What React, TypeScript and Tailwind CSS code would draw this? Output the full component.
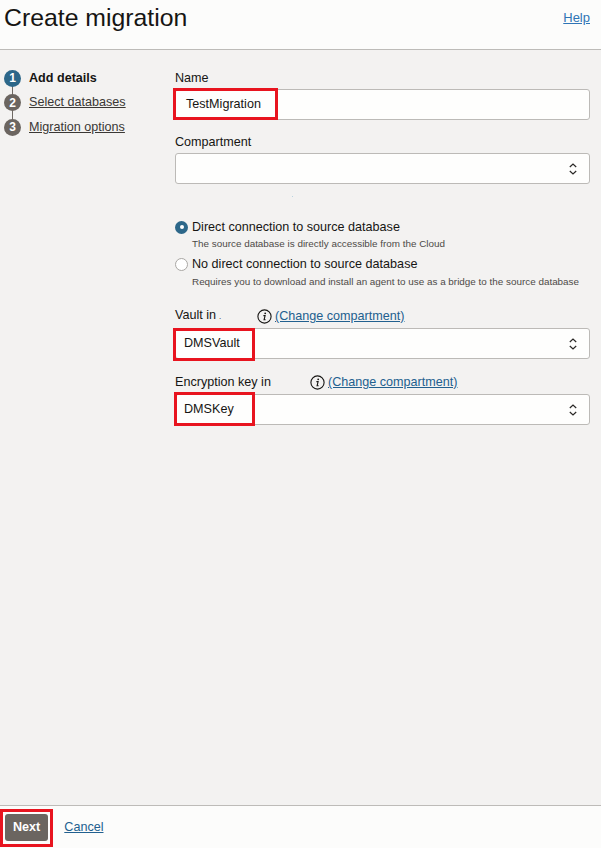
const ChevronUpDown = () => (
  <svg width="10" height="14" viewBox="0 0 10 14" fill="none" stroke="#2a2826" strokeWidth="1.2">
    <path d="M1.8 5 L5 2 L8.2 5" />
    <path d="M1.8 9 L5 12 L8.2 9" />
  </svg>
);

const InfoIcon = () => (
  <svg width="15" height="15" viewBox="0 0 15 15" fill="none">
    <circle cx="7.5" cy="7.5" r="6.6" stroke="#161513" strokeWidth="1.1" />
    <circle cx="8.2" cy="4.3" r="0.9" fill="#161513" />
    <path d="M6.4 6.6 H8.1 L7.1 10.8 H8.6" stroke="#161513" strokeWidth="1.1" fill="none" />
  </svg>
);

const RedBox = ({ className }: { className: string }) => (
  <div className={`pointer-events-none absolute border-[3px] border-[#e8141f] ${className}`} />
);

const Step = ({ n, label, active, last }: { n: number; label: string; active?: boolean; last?: boolean }) => (
  <div className="relative flex h-[24.5px] items-center gap-[8px]">
    {!last && <div className="absolute left-[8px] top-[12px] h-[25px] w-px bg-[#6f6a64]" />}
    <div
      className={`relative z-10 flex h-[17px] w-[17px] items-center justify-center rounded-full text-[12px] font-bold text-white ${
        active ? "bg-[#2c6789]" : "bg-[#6b6560]"
      }`}
    >
      {n}
    </div>
    {active ? (
      <span className="text-[12.6px] font-bold text-[#161513]">{label}</span>
    ) : (
      <span className="text-[12.6px] text-[#3a3835] underline">{label}</span>
    )}
  </div>
);

const Select = ({ value }: { value?: string }) => (
  <div className="flex h-[31px] items-center justify-between rounded-[3px] border border-[#bcbab7] bg-[#fefefd] pl-[8px] pr-[11px]">
    <span className="text-[12.6px] text-[#161513]">{value}</span>
    <ChevronUpDown />
  </div>
);

export default function App() {
  return (
    <div
      className="flex h-[848px] w-[601px] flex-col bg-[#f3f2f1] text-[#161513]"
      style={{ fontFamily: '"Liberation Sans", Arial, sans-serif' }}
    >
      <div className="flex h-[50px] shrink-0 items-start justify-between border-b border-[#bdbbb8] bg-[#fcfcfb] pl-[4px] pr-[11px]">
        <h1 className="mt-[4px] text-[24.8px] leading-[28px] text-[#161513]">Create migration</h1>
        <a className="mt-[8px] text-[13px] text-[#2f74b5] underline">Help</a>
      </div>

      <div className="flex flex-1 text-[12.6px]">
        <div className="w-[175px] shrink-0 pl-[4px] pt-[16px]">
          <Step n={1} label="Add details" active />
          <Step n={2} label="Select databases" />
          <Step n={3} label="Migration options" last />
        </div>

        <div className="relative flex w-[415px] flex-col pt-[19px]">
          <label className="h-[18px] leading-[18px]">Name</label>
          <div className="relative mt-[2px]">
            <div className="flex h-[31px] items-center rounded-[3px] border border-[#bcbab7] bg-[#fefefd] pl-[10px]">
              <span>TestMigration</span>
            </div>
            <RedBox className="-left-[2px] -top-[1px] h-[32px] w-[105px]" />
          </div>

          <label className="mt-[13px] h-[18px] leading-[18px]">Compartment</label>
          <div className="mt-[2px]">
            <Select />
          </div>

          <div className="relative h-[33px]">
            <div className="absolute left-[117px] top-[12px] h-px w-px bg-[#b9d3e0]" />
          </div>
          <div className="mt-[1px] flex h-[18px] items-center gap-[4px]">
            <div className="flex h-[13px] w-[13px] items-center justify-center rounded-full bg-[#2c6789]">
              <div className="h-[4px] w-[4px] rounded-full bg-white" />
            </div>
            <span className="leading-[18px]">Direct connection to source database</span>
          </div>
          <p className="mt-[1px] h-[14px] pl-[17px] text-[9.9px] leading-[14px] text-[#4d4a47]">
            The source database is directly accessible from the Cloud
          </p>
          <div className="mt-[4px] flex h-[18px] items-center gap-[4px]">
            <div className="h-[13px] w-[13px] rounded-full border border-[#a9a7a4] bg-white" />
            <span className="leading-[18px]">No direct connection to source database</span>
          </div>
          <p className="mt-[2px] h-[14px] pl-[17px] text-[9.9px] leading-[14px] text-[#4d4a47]">
            Requires you to download and install an agent to use as a bridge to the source database
          </p>

          <div className="mt-[18px] flex h-[18px] items-center">
            <label className="w-[82px] leading-[18px]">
              Vault in<span className="ml-[3px] text-[8px]">.</span>
            </label>
            <InfoIcon />
            <a className="ml-[3px] leading-[18px] text-[#22608f] underline">(Change compartment)</a>
          </div>
          <div className="relative mt-[3px]">
            <Select value="DMSVault" />
            <RedBox className="-left-[2px] top-0 h-[33px] w-[82px]" />
          </div>

          <div className="mt-[14px] flex h-[18px] items-center">
            <label className="w-[135px] leading-[18px]">Encryption key in</label>
            <InfoIcon />
            <a className="ml-[3px] leading-[18px] text-[#22608f] underline">(Change compartment)</a>
          </div>
          <div className="relative mt-[3px]">
            <Select value="DMSKey" />
            <RedBox className="-left-[1px] -top-[2px] h-[34px] w-[81px]" />
          </div>
        </div>
      </div>

      <div className="flex h-[43px] shrink-0 items-center gap-[16px] border-t border-[#bdbbb8] bg-[#fcfcfb]">
        <div className="relative ml-[5px]">
          <button className="h-[27px] rounded-[3px] bg-[#6b6560] px-[8px] text-[12.6px] font-bold text-white">
            Next
          </button>
          <RedBox className="-left-[5px] -top-[5px] h-[38px] w-[53px]" />
        </div>
        <a className="text-[12.6px] text-[#22608f] underline">Cancel</a>
      </div>
    </div>
  );
}
